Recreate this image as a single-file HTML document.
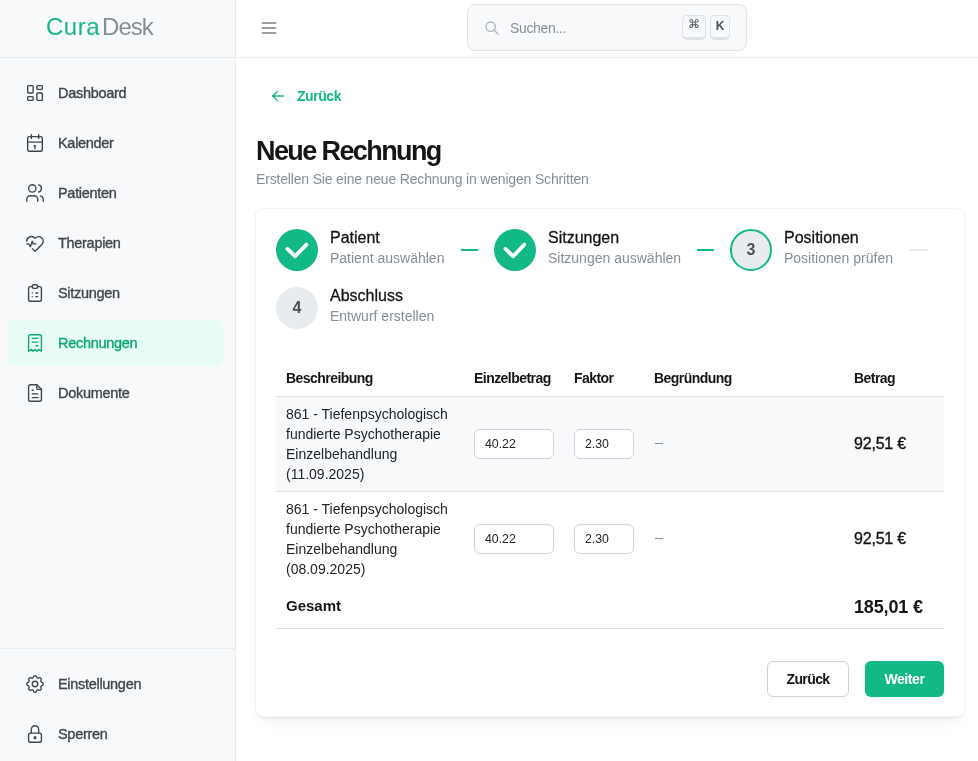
<!DOCTYPE html>
<html lang="de">
<head>
<meta charset="utf-8">
<style>
*{box-sizing:border-box;margin:0;padding:0}
html,body{width:978px;height:761px;overflow:hidden;background:#fff;font-family:"Liberation Sans",sans-serif;color:#212529}
.abs{position:absolute}
svg{display:block}
#side{position:absolute;left:0;top:0;width:236px;height:761px;background:#f8f9fa;border-right:1px solid #e9ecef}
#logo{position:absolute;left:0;top:0;width:235px;height:58px;border-bottom:1px solid #e9ecef}
#logo span{position:absolute;top:12px;font-size:24px;line-height:30px;white-space:nowrap}
.nav{position:absolute;left:8px;width:215px;height:46px;border-radius:8px;color:#40464e}
.nav svg{position:absolute;left:16px;top:12px;width:22px;height:22px;fill:none;stroke:currentColor;stroke-width:1.5;stroke-linecap:round;stroke-linejoin:round}
.nav span{position:absolute;left:50px;top:14px;font-size:14.5px;line-height:18px;font-weight:400;letter-spacing:-0.3px;white-space:nowrap;-webkit-text-stroke:0.35px currentColor}
.nav.active{background:#e6fcf5;color:#0ca678}
#botline{position:absolute;left:0;top:648px;width:235px;height:1px;background:#e9ecef}
#hdr{position:absolute;left:236px;top:0;width:742px;height:58px;border-bottom:1px solid #e9ecef}

.t{position:absolute;white-space:nowrap}
#burger{position:absolute;left:259px;top:18px;width:20px;height:20px;fill:none;stroke:#7a8189;stroke-width:2;stroke-linecap:round}
#search{position:absolute;left:467px;top:4px;width:280px;height:47px;background:#f8f9fa;border:1px solid #dee2e6;border-radius:8px}
.kbd{position:absolute;top:10px;height:25px;background:#f8f9fa;border:1px solid #dee2e6;border-bottom-width:3px;border-radius:5px;font-size:12px;font-weight:700;color:#495057;text-align:center;line-height:20px}
#card{position:absolute;left:255px;top:208px;width:710px;height:509px;background:#fff;border:1px solid #f3f4f5;border-radius:8px;box-shadow:0 1px 3px rgba(0,0,0,0.05),0 10px 15px -5px rgba(0,0,0,0.05),0 7px 7px -5px rgba(0,0,0,0.04)}
.circ{position:absolute;width:42px;height:42px;border-radius:50%}
.circ.done{background:#12b886}
.circ.cur{background:#e9ecef;border:2px solid #12b886}
.circ.todo{background:#e9ecef}
.circ b{position:absolute;left:0;right:0;top:0;bottom:0;text-align:center;font-size:16px;line-height:42px;color:#495057;font-weight:700}
.circ.cur b{line-height:38px}
.conn{position:absolute;top:249px;width:17px;height:2px;background:#12b886}
.st{position:absolute;white-space:nowrap;font-size:16px;line-height:18px;font-weight:400;color:#141517;-webkit-text-stroke:0.3px #141517}
.ss{position:absolute;white-space:nowrap;font-size:14px;line-height:18px;color:#868e96}
.th{position:absolute;top:369px;font-size:14px;line-height:18px;font-weight:700;letter-spacing:-0.55px;color:#141517;white-space:nowrap}
.desc{position:absolute;left:286px;font-size:14px;line-height:20px;color:#212529;white-space:nowrap}
.inp{position:absolute;height:30px;background:#fff;border:1px solid #ced4da;border-radius:6px;font-size:12.3px;line-height:28px;padding-left:10px;color:#212529}
.dash{position:absolute;left:655px;width:8px;height:1px;background:#868e96}
.amt{position:absolute;left:854px;font-size:16px;line-height:20px;font-weight:400;letter-spacing:-0.2px;color:#141517;white-space:nowrap;-webkit-text-stroke:0.35px #141517}
.hl{position:absolute;left:276px;width:668px;height:1px;background:#dee2e6}
.btn{position:absolute;top:661px;height:36px;border-radius:6px;font-size:14px;font-weight:700;text-align:center;line-height:34px}
</style>
</head>
<body>
<div id="wrap" style="position:absolute;left:0;top:0;width:978px;height:761px;will-change:transform">
<div id="side">
  <div id="logo"><span style="left:46px;color:#12b886;letter-spacing:0.5px">Cura</span><span id="desk" style="left:102px;color:#868e96;letter-spacing:-0.95px">Desk</span></div>
  <div class="nav" style="top:70px"><svg viewBox="0 0 24 24"><path d="M5 4h4a1 1 0 0 1 1 1v6a1 1 0 0 1 -1 1h-4a1 1 0 0 1 -1 -1v-6a1 1 0 0 1 1 -1"/><path d="M5 16h4a1 1 0 0 1 1 1v2a1 1 0 0 1 -1 1h-4a1 1 0 0 1 -1 -1v-2a1 1 0 0 1 1 -1"/><path d="M15 12h4a1 1 0 0 1 1 1v6a1 1 0 0 1 -1 1h-4a1 1 0 0 1 -1 -1v-6a1 1 0 0 1 1 -1"/><path d="M15 4h4a1 1 0 0 1 1 1v2a1 1 0 0 1 -1 1h-4a1 1 0 0 1 -1 -1v-2a1 1 0 0 1 1 -1"/></svg><span>Dashboard</span></div>
  <div class="nav" style="top:120px"><svg viewBox="0 0 24 24"><path d="M4 7a2 2 0 0 1 2 -2h12a2 2 0 0 1 2 2v12a2 2 0 0 1 -2 2h-12a2 2 0 0 1 -2 -2v-12z"/><path d="M16 3v4"/><path d="M8 3v4"/><path d="M4 11h16"/><path d="M11 15h1"/><path d="M12 15v3"/></svg><span>Kalender</span></div>
  <div class="nav" style="top:170px"><svg viewBox="0 0 24 24"><path d="M5 7a4 4 0 1 0 8 0a4 4 0 1 0 -8 0"/><path d="M3 21v-2a4 4 0 0 1 4 -4h4a4 4 0 0 1 4 4v2"/><path d="M16 3.13a4 4 0 0 1 0 7.75"/><path d="M21 21v-2a4 4 0 0 0 -3 -3.85"/></svg><span>Patienten</span></div>
  <div class="nav" style="top:220px"><svg viewBox="0 0 24 24"><path d="M19.5 13.572l-7.5 7.428l-2.896 -2.868m-6.117 -8.104a5 5 0 0 1 9.013 -3.022a5 5 0 1 1 7.5 6.572"/><path d="M3 13h2l2 3l2 -6l1 3h3"/></svg><span>Therapien</span></div>
  <div class="nav" style="top:270px"><svg viewBox="0 0 24 24"><path d="M9 5h-2a2 2 0 0 0 -2 2v12a2 2 0 0 0 2 2h10a2 2 0 0 0 2 -2v-12a2 2 0 0 0 -2 -2h-2"/><path d="M9 5a2 2 0 0 1 2 -2h2a2 2 0 0 1 2 2a2 2 0 0 1 -2 2h-2a2 2 0 0 1 -2 -2z"/><path d="M9 12h.01"/><path d="M13 12h2"/><path d="M9 16h.01"/><path d="M13 16h2"/></svg><span>Sitzungen</span></div>
  <div class="nav active" style="top:320px"><svg viewBox="0 0 24 24"><path d="M5 21v-16a2 2 0 0 1 2 -2h10a2 2 0 0 1 2 2v16l-3 -2l-2 2l-2 -2l-2 2l-2 -2l-3 2m4 -14h6m-6 4h6m-2 4h2"/></svg><span>Rechnungen</span></div>
  <div class="nav" style="top:370px"><svg viewBox="0 0 24 24"><path d="M14 3v4a1 1 0 0 0 1 1h4"/><path d="M17 21h-10a2 2 0 0 1 -2 -2v-14a2 2 0 0 1 2 -2h7l5 5v11a2 2 0 0 1 -2 2z"/><path d="M9 9h1"/><path d="M9 13h6"/><path d="M9 17h6"/></svg><span>Dokumente</span></div>
  <div id="botline"></div>
  <div class="nav" style="top:661px"><svg viewBox="0 0 24 24"><path d="M10.325 4.317c.426 -1.756 2.924 -1.756 3.35 0a1.724 1.724 0 0 0 2.573 1.066c1.543 -.94 3.31 .826 2.37 2.37a1.724 1.724 0 0 0 1.065 2.572c1.756 .426 1.756 2.924 0 3.35a1.724 1.724 0 0 0 -1.066 2.573c.94 1.543 -.826 3.31 -2.37 2.37a1.724 1.724 0 0 0 -2.572 1.065c-.426 1.756 -2.924 1.756 -3.35 0a1.724 1.724 0 0 0 -2.573 -1.066c-1.543 .94 -3.310 -.826 -2.37 -2.37a1.724 1.724 0 0 0 -1.065 -2.572c-1.756 -.426 -1.756 -2.924 0 -3.35a1.724 1.724 0 0 0 1.066 -2.573c-.94 -1.543 .826 -3.31 2.37 -2.37c1 .608 2.296 .07 2.572 -1.065z"/><path d="M9 12a3 3 0 1 0 6 0a3 3 0 0 0 -6 0"/></svg><span>Einstellungen</span></div>
  <div class="nav" style="top:711px"><svg viewBox="0 0 24 24"><path d="M5 13a2 2 0 0 1 2 -2h10a2 2 0 0 1 2 2v6a2 2 0 0 1 -2 2h-10a2 2 0 0 1 -2 -2v-6z"/><path d="M11 16a1 1 0 1 0 2 0a1 1 0 0 0 -2 0"/><path d="M8 11v-4a4 4 0 1 1 8 0v4"/></svg><span>Sperren</span></div>
</div>

<div id="hdr"><svg id="burger" style="left:23px" viewBox="0 0 24 24"><path d="M4 6h16M4 12h16M4 18h16"/></svg></div>
<div id="search">
  <svg style="position:absolute;left:16px;top:15px;width:16px;height:16px;fill:none;stroke:#adb5bd;stroke-width:2;stroke-linecap:round" viewBox="0 0 24 24"><path d="M3 10a7 7 0 1 0 14 0a7 7 0 1 0 -14 0"/><path d="M21 21l-6 -6"/></svg>
  <div class="t" style="left:42px;top:14px;font-size:14px;line-height:18px;color:#868e96;letter-spacing:-0.35px">Suchen...</div>
  <div class="kbd" style="left:214px;width:24px;font-weight:400;font-size:12px;line-height:16px">&#8984;</div>
  <div class="kbd" style="left:242px;width:20px;line-height:21px">K</div>
</div>
<svg style="position:absolute;left:269px;top:87px;width:18px;height:18px;fill:none;stroke:#12b886;stroke-width:1.75;stroke-linecap:round;stroke-linejoin:round" viewBox="0 0 24 24"><path d="M5 12h14"/><path d="M5 12l6 6"/><path d="M5 12l6 -6"/></svg>
<div class="t" style="left:297px;top:87px;font-size:14px;line-height:18px;font-weight:700;color:#12b886;letter-spacing:-0.45px">Zurück</div>
<div class="t" style="left:256px;top:135.5px;font-size:27px;line-height:30px;font-weight:700;color:#141517;letter-spacing:-1.6px">Neue Rechnung</div>
<div class="t" style="left:256px;top:170px;font-size:14px;line-height:18px;color:#868e96;letter-spacing:-0.17px">Erstellen Sie eine neue Rechnung in wenigen Schritten</div>
<div id="card"></div>
<!-- steps -->
<div class="circ done" style="left:276px;top:229px"><svg style="position:absolute;left:0;top:0;width:42px;height:42px;fill:none;stroke:#fff;stroke-width:3.8;stroke-linecap:round;stroke-linejoin:round" viewBox="0 0 42 42"><path d="M11.4 19.9L19.2 27.3L30.4 15.6"/></svg></div>
<div class="st" style="left:330px;top:229px">Patient</div>
<div class="ss" style="left:330px;top:249px">Patient auswählen</div>
<div class="conn" style="left:461px"></div>
<div class="circ done" style="left:494px;top:229px"><svg style="position:absolute;left:0;top:0;width:42px;height:42px;fill:none;stroke:#fff;stroke-width:3.8;stroke-linecap:round;stroke-linejoin:round" viewBox="0 0 42 42"><path d="M11.4 19.9L19.2 27.3L30.4 15.6"/></svg></div>
<div class="st" style="left:548px;top:229px">Sitzungen</div>
<div class="ss" style="left:548px;top:249px">Sitzungen auswählen</div>
<div class="conn" style="left:697px"></div>
<div class="circ cur" style="left:730px;top:229px"><b>3</b></div>
<div class="st" style="left:784px;top:229px">Positionen</div>
<div class="ss" style="left:784px;top:249px">Positionen prüfen</div>
<div class="conn" style="left:910px;width:18px;background:#e9ecef"></div>
<div class="circ todo" style="left:276px;top:287px"><b>4</b></div>
<div class="st" style="left:330px;top:287px">Abschluss</div>
<div class="ss" style="left:330px;top:307px">Entwurf erstellen</div>
<!-- table -->
<div class="th" style="left:286px">Beschreibung</div>
<div class="th" style="left:474px">Einzelbetrag</div>
<div class="th" style="left:574px">Faktor</div>
<div class="th" style="left:654px">Begründung</div>
<div class="th" style="left:854px">Betrag</div>
<div class="hl" style="top:396px"></div>
<div style="position:absolute;left:276px;top:397px;width:668px;height:94px;background:#f8f9fa"></div>
<div class="hl" style="top:491px"></div>
<div class="desc" style="top:404px">861 - Tiefenpsychologisch<br>fundierte Psychotherapie<br>Einzelbehandlung<br>(11.09.2025)</div>
<div class="inp" style="left:474px;top:429px;width:80px">40.22</div>
<div class="inp" style="left:574px;top:429px;width:60px">2.30</div>
<div class="dash" style="top:443px"></div>
<div class="amt" style="top:434px">92,51 €</div>
<div class="desc" style="top:499px">861 - Tiefenpsychologisch<br>fundierte Psychotherapie<br>Einzelbehandlung<br>(08.09.2025)</div>
<div class="inp" style="left:474px;top:524px;width:80px">40.22</div>
<div class="inp" style="left:574px;top:524px;width:60px">2.30</div>
<div class="dash" style="top:538px"></div>
<div class="amt" style="top:529px">92,51 €</div>
<div class="t" style="left:286px;top:597px;font-size:15px;line-height:18px;font-weight:700;color:#141517">Gesamt</div>
<div class="amt" style="top:596px;font-size:18px;line-height:22px;letter-spacing:-0.15px;font-weight:700;-webkit-text-stroke:0">185,01 €</div>
<div class="hl" style="top:628px"></div>
<div class="btn" style="left:767px;width:82px;background:#fff;border:1px solid #ced4da;color:#141517;letter-spacing:-0.6px">Zurück</div>
<div class="btn" style="left:865px;width:79px;background:#12b886;color:#fff;letter-spacing:-0.4px;line-height:36px">Weiter</div>

</div>
</body>
</html>
